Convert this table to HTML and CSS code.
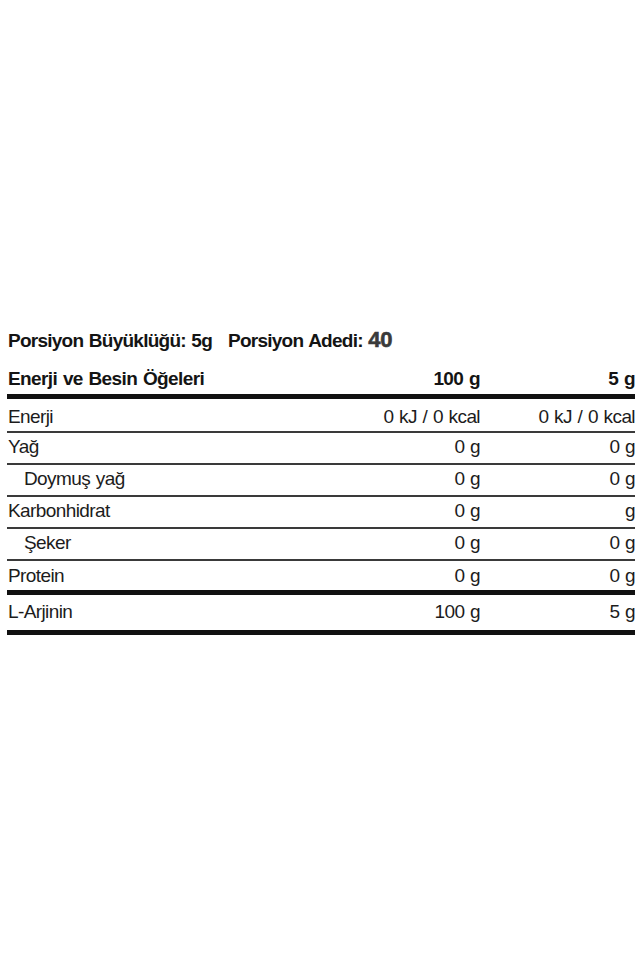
FILE: index.html
```html
<!DOCTYPE html>
<html lang="tr">
<head>
<meta charset="utf-8">
<title>Besin Değerleri</title>
<link rel="stylesheet" href="styles.css">
</head>
<body>
<div class="label">
  <div class="serving">
    <span class="size">Porsiyon Büyüklüğü: 5g</span>
    <span class="count">Porsiyon Adedi: <span class="num">40</span></span>
  </div>
  <table class="facts">
    <colgroup>
      <col class="c-name">
      <col class="c-100">
      <col class="c-5">
    </colgroup>
    <thead>
      <tr>
        <th class="name">Enerji ve Besin Öğeleri</th>
        <th>100 g</th>
        <th>5 g</th>
      </tr>
    </thead>
    <tbody>
      <tr class="first">
        <td class="name">Enerji</td>
        <td>0 kJ / 0 kcal</td>
        <td>0 kJ / 0 kcal</td>
      </tr>
      <tr>
        <td class="name">Yağ</td>
        <td>0 g</td>
        <td>0 g</td>
      </tr>
      <tr>
        <td class="name sub">Doymuş yağ</td>
        <td>0 g</td>
        <td>0 g</td>
      </tr>
      <tr>
        <td class="name">Karbonhidrat</td>
        <td>0 g</td>
        <td>g</td>
      </tr>
      <tr>
        <td class="name sub">Şeker</td>
        <td>0 g</td>
        <td>0 g</td>
      </tr>
      <tr class="heavy">
        <td class="name">Protein</td>
        <td>0 g</td>
        <td>0 g</td>
      </tr>
      <tr class="last">
        <td class="name">L-Arjinin</td>
        <td>100 g</td>
        <td>5 g</td>
      </tr>
    </tbody>
  </table>
</div>
</body>
</html>
```
FILE: styles.css
```css
html, body {
  margin: 0;
  padding: 0;
  background: #ffffff;
}

body {
  font-family: "Liberation Sans", Arial, sans-serif;
  color: #1c1c1c;
}

.label {
  width: 628px;
  padding: 330px 0 0 7px;
}

.serving {
  display: flex;
  align-items: baseline;
  gap: 16px;
  padding-left: 1px;
  font-size: 19px;
  line-height: 20px;
  font-weight: bold;
  letter-spacing: -0.75px;
  word-spacing: 1px;
  color: #141414;
  margin-bottom: 18px;
}

.num {
  font-family: "Liberation Sans", Arial, sans-serif;
  font-size: 22px;
  font-weight: bold;
  letter-spacing: -0.3px;
  color: #3a3a3a;
  -webkit-text-stroke: 0.6px #3a3a3a;
}

.facts {
  width: 100%;
  border-collapse: separate;
  border-spacing: 0;
  table-layout: fixed;
  font-size: 19px;
  line-height: 20px;
  letter-spacing: -0.6px;
  word-spacing: 1px;
}

.c-100 {
  width: 150px;
}

.c-5 {
  width: 155px;
}

.facts th,
.facts td {
  text-align: right;
  white-space: nowrap;
  padding: 4px 0 6px 0;
  border-bottom: 2px solid #3a3a3a;
}

.facts th {
  font-weight: bold;
  color: #141414;
  padding: 0 0 5px 0;
  border-bottom: 5px solid #111111;
}

.facts .name {
  text-align: left;
  padding-left: 1px;
}

.facts .sub {
  padding-left: 17px;
}

.facts .first td {
  padding-top: 8px;
  padding-bottom: 4px;
}

.facts .heavy td {
  padding-top: 5px;
  padding-bottom: 4px;
  border-bottom: 5px solid #111111;
}

.facts .last td {
  padding-top: 7px;
  padding-bottom: 8px;
  border-bottom: 5px solid #111111;
}
```
